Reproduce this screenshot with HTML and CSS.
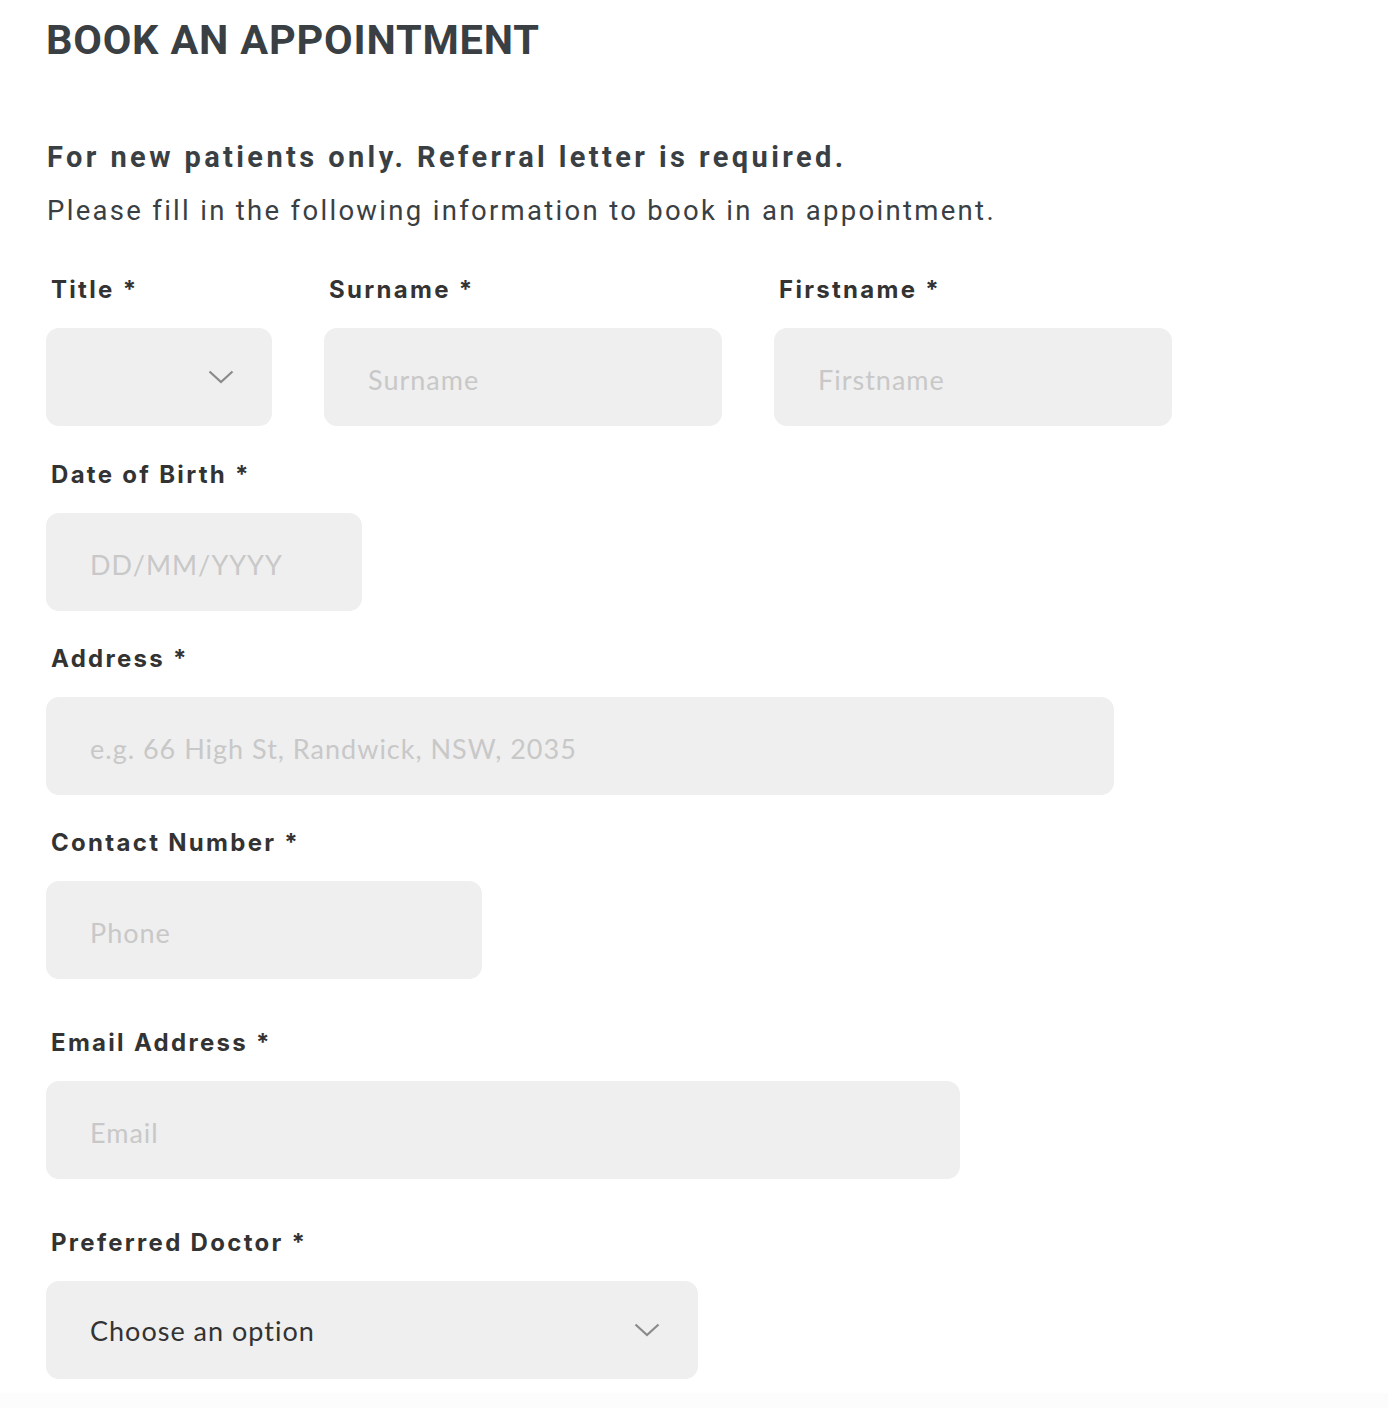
FILE: index.html
```html
<!DOCTYPE html>
<html lang="en">
<head>
<meta charset="utf-8">
<title>Book an Appointment</title>
<link rel="stylesheet" href="styles.css">
</head>
<body>
<main class="page">
  <h1 class="title">BOOK AN APPOINTMENT</h1>
  <p class="lead-strong">For new patients only. Referral letter is required.</p>
  <p class="lead">Please fill in the following information to book in an appointment.</p>

  <form class="form">
    <div class="row">
      <div class="field f-title">
        <label class="label">Title *</label>
        <div class="control select">
          <span class="value"></span>
          <svg class="chev" width="26" height="14" viewBox="0 0 26 14"><path d="M1.5 1.5 L13 12 L24.5 1.5" fill="none" stroke="#8a8a8a" stroke-width="2.2"/></svg>
        </div>
      </div>
      <div class="field f-name">
        <label class="label">Surname *</label>
        <div class="control"><span class="ph">Surname</span></div>
      </div>
      <div class="field f-name">
        <label class="label">Firstname *</label>
        <div class="control"><span class="ph">Firstname</span></div>
      </div>
    </div>

    <div class="field f-dob first">
      <label class="label">Date of Birth *</label>
      <div class="control"><span class="ph">DD/MM/YYYY</span></div>
    </div>

    <div class="field f-address">
      <label class="label">Address *</label>
      <div class="control"><span class="ph">e.g. 66 High St, Randwick, NSW, 2035</span></div>
    </div>

    <div class="field f-phone">
      <label class="label">Contact Number *</label>
      <div class="control"><span class="ph">Phone</span></div>
    </div>

    <div class="field f-email spaced">
      <label class="label">Email Address *</label>
      <div class="control"><span class="ph">Email</span></div>
    </div>

    <div class="field f-doctor spaced">
      <label class="label">Preferred Doctor *</label>
      <div class="control select">
        <span class="value">Choose an option</span>
        <svg class="chev" width="26" height="14" viewBox="0 0 26 14"><path d="M1.5 1.5 L13 12 L24.5 1.5" fill="none" stroke="#8a8a8a" stroke-width="2.2"/></svg>
      </div>
    </div>
  </form>
</main>
<div class="footer-strip"></div>
</body>
</html>
```

FILE: styles.css
```css
* { box-sizing: border-box; }
html, body { margin: 0; padding: 0; background: #ffffff; }
body { font-family: Roboto, "Liberation Sans", sans-serif; color: #3a3f44; }

.page {
  padding: 15px 0 0 46px;
}

.title {
  margin: 0;
  font-family: Roboto, sans-serif;
  font-weight: 700;
  font-size: 41.5px;
  line-height: 50px;
  letter-spacing: 0.8px;
  color: #3a3f44;
}

.lead-strong {
  margin: 72px 0 0 1px;
  font-family: Roboto, sans-serif;
  font-weight: 700;
  font-size: 29px;
  line-height: 40px;
  letter-spacing: 3.4px;
  color: #3a3f44;
}

.lead {
  margin: 14px 0 0 1px;
  font-family: Roboto, sans-serif;
  font-weight: 400;
  font-size: 27.5px;
  line-height: 40px;
  letter-spacing: 2.3px;
  color: #3a3f44;
}

.form {
  display: flex;
  flex-direction: column;
  margin-top: 44px;
  gap: 33px;
}

.row {
  display: flex;
  gap: 52px;
}

.field { display: flex; flex-direction: column; }
.field.first { margin-top: 1px; }
.field.spaced { margin-top: 16px; }

.label {
  font-family: Inter, "Liberation Sans", sans-serif;
  font-weight: 700;
  font-size: 24px;
  line-height: 30px;
  letter-spacing: 2.3px;
  color: #333333;
  margin: 0 0 23px 5px;
}

.control {
  height: 98px;
  border-radius: 13px;
  background: #efefef;
  display: flex;
  align-items: center;
  padding: 4px 44px 0;
  font-family: Lato, "Liberation Sans", sans-serif;
  font-size: 27px;
  letter-spacing: 1px;
}

.ph { color: #c8c8c8; }
.value { color: #333333; flex: 1; }

.select { padding-right: 38px; padding-top: 0; }
.chev { display: block; flex: none; }

.f-title { width: 226px; }
.f-name { width: 398px; }
.f-dob { width: 316px; }
.f-address { width: 1068px; }
.f-phone { width: 436px; }
.f-email { width: 914px; }
.f-doctor { width: 652px; }

.footer-strip {
  margin-top: 14px;
  height: 20px;
  background: #fcfcfc;
}
```
